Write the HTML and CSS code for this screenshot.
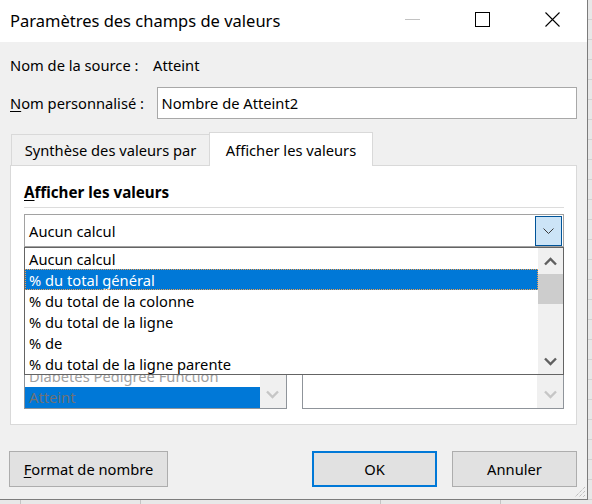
FILE: index.html
```html
<!DOCTYPE html>
<html lang="fr">
<head>
<meta charset="utf-8">
<title>Paramètres des champs de valeurs</title>
<link rel="stylesheet" href="styles.css">
</head>
<body>
<div class="dialog">
  <div class="titlebar">
    <span class="title">Paramètres des champs de valeurs</span>
    <div class="caption">
      <span class="cbtn"><svg width="15" height="15" viewBox="0 0 15 15"><rect x="0" y="7" width="15" height="1" fill="#c2c2c2"/></svg></span>
      <span class="cbtn"><svg width="15" height="15" viewBox="0 0 15 15"><rect x="0.5" y="0.5" width="14" height="14" fill="none" stroke="#000" stroke-width="1"/></svg></span>
      <span class="cbtn"><svg width="15" height="15" viewBox="0 0 15 15"><path d="M0.5 0.5L14.5 14.5M14.5 0.5L0.5 14.5" stroke="#000" stroke-width="1.1" fill="none"/></svg></span>
    </div>
  </div>
  <div class="content">
    <div class="row-src"><span class="lbl-src">Nom de la source :</span><span>Atteint</span></div>
    <div class="row-name"><span class="lbl-name"><u>N</u>om personnalisé :</span><div class="input">Nombre de Atteint2</div></div>
    <div class="tabs">
      <div class="tab">Synthèse des valeurs par</div>
      <div class="tab active">Afficher les valeurs</div>
    </div>
    <div class="panel">
      <div class="heading"><u>A</u>fficher les valeurs</div>
      <div class="sep"></div>
      <div class="combo-wrap">
        <div class="combo">
          <span class="combo-text">Aucun calcul</span>
          <span class="dd-btn"><svg width="11" height="6" viewBox="0 0 11 6"><polyline points="0.5,0.5 5.5,5.5 10.5,0.5" fill="none" stroke="#3a3a3a" stroke-width="1"/></svg></span>
        </div>
        <div class="lists">
          <div class="list">
            <div class="list-items">
              <div class="litem dim">Diabetes Pedigree Function</div>
              <div class="litem sel-dis">Atteint</div>
            </div>
            <div class="list-sb"><svg width="13" height="9" viewBox="0 0 13 9"><polyline points="1,1.5 6.5,7 12,1.5" fill="none" stroke="#c6c6c6" stroke-width="2.4"/></svg></div>
          </div>
          <div class="list">
            <div class="list-items"></div>
            <div class="list-sb"><svg width="13" height="9" viewBox="0 0 13 9"><polyline points="1,1.5 6.5,7 12,1.5" fill="none" stroke="#c6c6c6" stroke-width="2.4"/></svg></div>
          </div>
        </div>
        <div class="dropdown">
          <div class="dd-items">
            <div class="ditem">Aucun calcul</div>
            <div class="ditem selected">% du total général</div>
            <div class="ditem">% du total de la colonne</div>
            <div class="ditem">% du total de la ligne</div>
            <div class="ditem">% de</div>
            <div class="ditem">% du total de la ligne parente</div>
          </div>
          <div class="dd-sb">
            <div class="sb-arrow"><svg width="13" height="9" viewBox="0 0 13 9"><polyline points="1,7.5 6.5,2 12,7.5" fill="none" stroke="#606060" stroke-width="2.4"/></svg></div>
            <div class="sb-thumb"></div>
            <div class="sb-track"></div>
            <div class="sb-arrow"><svg width="13" height="9" viewBox="0 0 13 9"><polyline points="1,1.5 6.5,7 12,1.5" fill="none" stroke="#606060" stroke-width="2.4"/></svg></div>
          </div>
        </div>
      </div>
    </div>
    <div class="buttons">
      <div class="btn btn-format"><u>F</u>ormat de nombre</div>
      <div class="btn btn-ok">OK</div>
      <div class="btn btn-cancel">Annuler</div>
    </div>
  </div>
  <svg class="grip" width="12" height="12" viewBox="0 0 12 12">
    <path d="M11 1L1 11M11 5L5 11M11 9L9 11" stroke="#a8a8a8" stroke-width="1" stroke-dasharray="1 1" fill="none"/>
  </svg>
</div>
</body>
</html>
```
FILE: styles.css
```css
* { box-sizing: border-box; }
html, body { margin: 0; padding: 0; }
body {
  width: 592px;
  height: 504px;
  overflow: hidden;
  font-family: "Noto Sans", "Open Sans", sans-serif;
  font-size: 14.7px;
  line-height: 20px;
  color: #000;
  background-color: #e8e8e8;
  background-image:
    linear-gradient(to right, transparent 20px, #c4c4c4 20px, #c4c4c4 21px, transparent 21px),
    linear-gradient(to right, transparent 140px, #c4c4c4 140px, #c4c4c4 141px, transparent 141px),
    linear-gradient(to right, transparent 380px, #c4c4c4 380px, #c4c4c4 381px, transparent 381px),
    linear-gradient(to right, transparent 500px, #c4c4c4 500px, #c4c4c4 501px, transparent 501px),
    repeating-linear-gradient(to bottom, transparent 0, transparent 19px, #d2d2d2 19px, #d2d2d2 20px);
}
u { text-decoration: underline; text-underline-offset: 2px; }

.dialog {
  position: relative;
  width: 588px;
  height: 500px;
  background: #f0f0f0;
  border-right: 1px solid #7c7c7c;
  border-bottom: 1px solid #7c7c7c;
  display: flex;
  flex-direction: column;
}

.titlebar {
  flex: none;
  height: 42px;
  background: #fff;
  display: flex;
  align-items: center;
  padding-left: 10px;
}
.title { font-size: 16.5px; }
.caption { margin-left: auto; display: flex; height: 100%; }
.cbtn {
  width: 70px;
  height: 100%;
  display: flex;
  align-items: center;
  justify-content: center;
  padding-bottom: 3px;
}
.cbtn svg { display: block; }

.content { padding: 0 10px; display: flex; flex-direction: column; }

.row-src { margin-top: 13px; display: flex; }
.lbl-src { width: 143px; }

.row-name { margin-top: 12px; display: flex; align-items: center; }
.lbl-name { width: 148px; }
.input {
  width: 421px;
  height: 32px;
  background: #fff;
  border: 1px solid #a8a8a8;
  padding-left: 3px;
  display: flex;
  align-items: center;
}

.tabs { margin-top: 13px; display: flex; align-items: flex-end; padding-left: 1px; }
.tab {
  width: 198px;
  height: 31px;
  background: #f0f0f0;
  border-top: 1px solid #d9d9d9;
  border-left: 1px solid #d9d9d9;
  display: flex;
  align-items: center;
  justify-content: center;
}
.tab.active {
  width: 164px;
  height: 34px;
  margin-bottom: -1px;
  background: #fff;
  border: 1px solid #d9d9d9;
  border-bottom: none;
  position: relative;
  z-index: 1;
}

.panel {
  width: 567px;
  background: #fff;
  border: 1px solid #d9d9d9;
  padding: 16px 12px 15px 13px;
}
.heading { font-weight: bold; font-size: 15.2px; }
.sep { margin-top: 5px; height: 1px; background: #dcdcdc; }

.combo-wrap { position: relative; margin-top: 6px; }
.combo {
  height: 33px;
  border: 1px solid #a2a2a2;
  display: flex;
  padding: 1px 1px 0 1px;
}
.combo-text { flex: 1; display: flex; align-items: center; padding-left: 3px; }
.dd-btn {
  width: 27px;
  height: 30px;
  background: #cce4f7;
  border: 1px solid #005499;
  display: flex;
  align-items: center;
  justify-content: center;
}
.dd-btn svg { display: block; }

.lists {
  margin-top: 53px;
  height: 109px;
  display: grid;
  grid-template-columns: 1fr 1fr;
  column-gap: 15px;
}
.list {
  border: 1px solid #8f949a;
  background: #fff;
  display: flex;
  overflow: hidden;
}
.list-items { flex: 1; display: flex; flex-direction: column; justify-content: flex-end; }
.litem { height: 21px; line-height: 21px; padding-left: 4px; white-space: nowrap; }
.litem.dim { color: #a0a0a0; }
.litem.sel-dis { background: #0078d7; color: #6f7275; }
.list-sb {
  width: 26px;
  background: #f0f0f0;
  display: flex;
  align-items: flex-end;
  justify-content: center;
  padding-bottom: 9px;
}
.list-sb svg { display: block; }

.dropdown {
  position: absolute;
  top: 33px;
  left: 0;
  width: 540px;
  height: 128px;
  background: #fff;
  border: 1px solid #646464;
  display: flex;
}
.dd-items { flex: 1; }
.ditem { height: 21px; line-height: 22px; padding-left: 4px; white-space: nowrap; }
.ditem.selected {
  background: #0078d7;
  color: #fff;
  outline: 1px dotted #f0a050;
  outline-offset: -1px;
}
.dd-sb { width: 25px; background: #f0f0f0; display: flex; flex-direction: column; }
.sb-arrow { height: 26px; display: flex; align-items: center; justify-content: center; }
.sb-arrow svg { display: block; }
.sb-thumb { height: 30px; background: #cdcdcd; }
.sb-track { flex: 1; }

.buttons { margin-top: 26px; display: flex; }
.btn {
  height: 36px;
  background: #e1e1e1;
  border: 1px solid #adadad;
  display: flex;
  align-items: center;
  justify-content: center;
}
.btn-format { width: 159px; margin-left: -1px; }
.btn-ok { width: 125px; margin-left: auto; border: 2px solid #0078d7; }
.btn-cancel { width: 125px; margin-left: 15px; }

.grip { position: absolute; right: 1px; bottom: 1px; display: block; }
```
